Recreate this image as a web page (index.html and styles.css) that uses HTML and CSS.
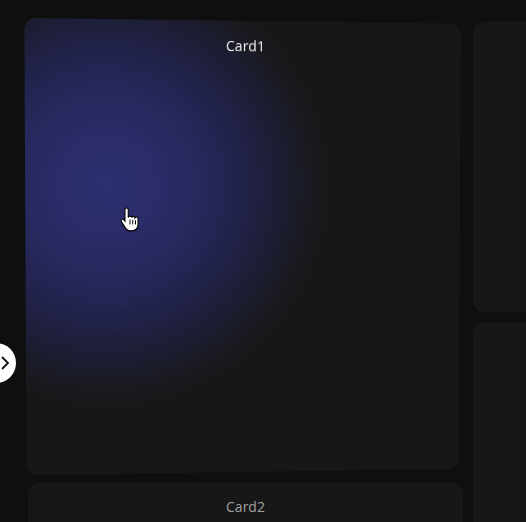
FILE: index.html
```html
<!DOCTYPE html>
<html>
<head>
<meta charset="utf-8">
<link rel="stylesheet" href="styles.css">
</head>
<body>
<div class="board">
  <div class="col">
    <div class="card card-main">
      <div class="card-title">Card1</div>
    </div>
    <div class="card card-second">
      <div class="card-title muted">Card2</div>
    </div>
  </div>
  <div class="col">
    <div class="card card-side-a"></div>
    <div class="card card-side-b"></div>
  </div>
</div>
<button class="nav-btn" aria-label="next">
  <svg width="12" height="16" viewBox="0 0 12 16"><path d="M3 2 L9 8 L3 14" fill="none" stroke="#111" stroke-width="1.8"/></svg>
</button>
<svg class="cursor" width="22" height="27" viewBox="0 0 20 24">
  <path d="M6 1.5c.9 0 1.5.6 1.5 1.5v7.2c.2-.9.9-1.3 1.6-1.3.8 0 1.4.5 1.5 1.3.2-.6.8-1 1.5-1 .8 0 1.4.6 1.5 1.300.2-.5.7-.8 1.3-.8.9 0 1.5.7 1.5 1.6v5.2c0 3.3-2.3 5.8-5.6 5.8h-1.2c-2 0-3.4-.8-4.6-2.5L1.4 14.2c-.5-.7-.4-1.6.3-2.1.6-.4 1.4-.3 1.9.3l.9 1.1V3c0-.9.6-1.5 1.5-1.5z" fill="#fff" stroke="#000" stroke-width="1"/>
  <path d="M9.1 12v4.5M11.6 12.2v4.3M14.1 12.6v3.9" stroke="#000" stroke-width="0.9"/>
</svg>
</body>
</html>
```
FILE: styles.css
```css
html, body {
  margin: 0;
  padding: 0;
  background: #0f0f0f;
  overflow: hidden;
  height: 100%;
  font-family: "Open Sans", "Noto Sans", sans-serif;
}

.board {
  display: flex;
  gap: 10px;
  padding: 22px 0 0 28px;
}

.col {
  display: flex;
  flex-direction: column;
  gap: 10px;
  width: 435px;
  flex-shrink: 0;
}

.card {
  background: #171717;
  border-radius: 11px;
}

.card-main {
  height: 451px;
  background:
    radial-gradient(circle 225px at 80px 163px,
      #2d2e6f 0%,
      #2b2c69 20%,
      #27285d 40%,
      #212249 60%,
      #1c1d31 78%,
      #191a20 90%,
      rgba(23,23,23,0) 100%),
    #171717;
  transform: perspective(1000px) rotateX(-1.2deg) rotateY(3.6deg);
}

.card-second { height: 220px; }
.card-side-a { height: 290px; }
.card-side-b { height: 400px; }

.card-title {
  text-align: center;
  color: #f2f2f2;
  font-size: 14px;
  line-height: 20px;
  padding-top: 15px;
}

.card-title.muted {
  color: #a0a0a0;
  padding-top: 14px;
}

.nav-btn {
  position: fixed;
  left: -24px;
  top: 343px;
  width: 40px;
  height: 40px;
  border-radius: 50%;
  border: none;
  background: #ffffff;
  padding: 0 0 0 22px;
  display: flex;
  align-items: center;
  justify-content: flex-start;
}

.nav-btn svg {
  display: block;
  margin-left: 1px;
}

.cursor {
  position: fixed;
  left: 120px;
  top: 206px;
}
```
